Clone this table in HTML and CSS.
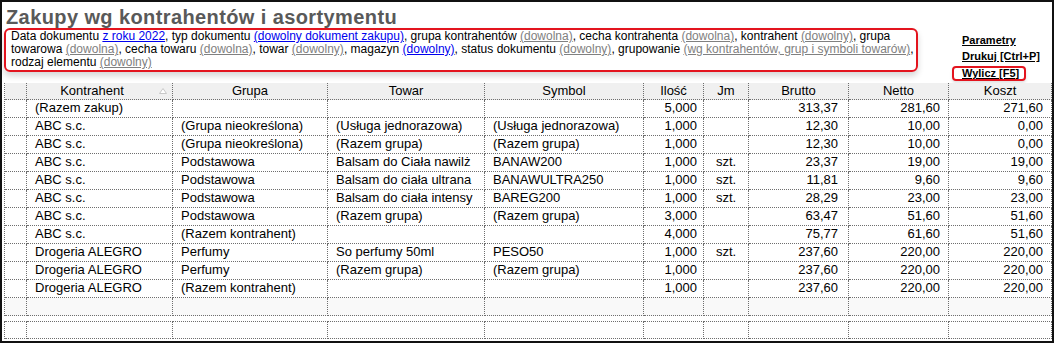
FILE: index.html
```html
<!DOCTYPE html>
<html lang="pl">
<head>
<meta charset="utf-8">
<title>Zakupy wg kontrahentów i asortymentu</title>
<link rel="stylesheet" href="styles.css">
</head>
<body>
<div class="frame">
  <h1 class="title">Zakupy wg kontrahentów i asortymentu</h1>
  <div class="top">
    <div class="params">
      Data dokumentu <a class="lk blue">z roku 2022</a>, typ dokumentu <a class="lk blue">(dowolny dokument zakupu)</a>, grupa kontrahentów <a class="lk gray">(dowolna)</a>, cecha kontrahenta <a class="lk gray">(dowolna)</a>, kontrahent <a class="lk gray">(dowolny)</a>, grupa<br>
      towarowa <a class="lk gray">(dowolna)</a>, cecha towaru <a class="lk gray">(dowolna)</a>, towar <a class="lk gray">(dowolny)</a>, magazyn <a class="lk blue">(dowolny)</a>, status dokumentu <a class="lk gray">(dowolny)</a>, grupowanie <a class="lk gray">(wg kontrahentów, grup i symboli towarów)</a>,<br>
      rodzaj elementu <a class="lk gray">(dowolny)</a>
    </div>
    <div class="actions">
      <a class="act">Parametry</a>
      <a class="act">Drukuj [Ctrl+P]</a>
      <a class="act act-hl">Wylicz [F5]</a>
    </div>
  </div>

  <div class="grid">
    <div class="h"></div>
    <div class="h h-sort">Kontrahent<svg class="sort" width="8" height="6" viewBox="0 0 8 6"><polygon points="4,0.5 7.5,5.5 0.5,5.5" fill="#fff" stroke="#c8c8c8" stroke-width="1"/></svg></div>
    <div class="h">Grupa</div>
    <div class="h">Towar</div>
    <div class="h">Symbol</div>
    <div class="h">Ilość</div>
    <div class="h">Jm</div>
    <div class="h">Brutto</div>
    <div class="h">Netto</div>
    <div class="h">Koszt</div>

    <div class="c"></div><div class="c">(Razem zakup)</div><div class="c"></div><div class="c"></div><div class="c"></div><div class="c n q">5,000</div><div class="c j"></div><div class="c n b">313,37</div><div class="c n">281,60</div><div class="c n">271,60</div>

    <div class="c"></div><div class="c">ABC s.c.</div><div class="c">(Grupa nieokreślona)</div><div class="c">(Usługa jednorazowa)</div><div class="c">(Usługa jednorazowa)</div><div class="c n q">1,000</div><div class="c j"></div><div class="c n b">12,30</div><div class="c n">10,00</div><div class="c n">0,00</div>

    <div class="c"></div><div class="c">ABC s.c.</div><div class="c">(Grupa nieokreślona)</div><div class="c">(Razem grupa)</div><div class="c">(Razem grupa)</div><div class="c n q">1,000</div><div class="c j"></div><div class="c n b">12,30</div><div class="c n">10,00</div><div class="c n">0,00</div>

    <div class="c"></div><div class="c">ABC s.c.</div><div class="c">Podstawowa</div><div class="c">Balsam do Ciała nawilż</div><div class="c">BANAW200</div><div class="c n q">1,000</div><div class="c j">szt.</div><div class="c n b">23,37</div><div class="c n">19,00</div><div class="c n">19,00</div>

    <div class="c"></div><div class="c">ABC s.c.</div><div class="c">Podstawowa</div><div class="c">Balsam do ciała ultrana</div><div class="c">BANAWULTRA250</div><div class="c n q">1,000</div><div class="c j">szt.</div><div class="c n b">11,81</div><div class="c n">9,60</div><div class="c n">9,60</div>

    <div class="c"></div><div class="c">ABC s.c.</div><div class="c">Podstawowa</div><div class="c">Balsam do ciała intensy</div><div class="c">BAREG200</div><div class="c n q">1,000</div><div class="c j">szt.</div><div class="c n b">28,29</div><div class="c n">23,00</div><div class="c n">23,00</div>

    <div class="c"></div><div class="c">ABC s.c.</div><div class="c">Podstawowa</div><div class="c">(Razem grupa)</div><div class="c">(Razem grupa)</div><div class="c n q">3,000</div><div class="c j"></div><div class="c n b">63,47</div><div class="c n">51,60</div><div class="c n">51,60</div>

    <div class="c"></div><div class="c">ABC s.c.</div><div class="c">(Razem kontrahent)</div><div class="c"></div><div class="c"></div><div class="c n q">4,000</div><div class="c j"></div><div class="c n b">75,77</div><div class="c n">61,60</div><div class="c n">51,60</div>

    <div class="c"></div><div class="c">Drogeria ALEGRO</div><div class="c">Perfumy</div><div class="c">So perfumy 50ml</div><div class="c">PESO50</div><div class="c n q">1,000</div><div class="c j">szt.</div><div class="c n b">237,60</div><div class="c n">220,00</div><div class="c n">220,00</div>

    <div class="c"></div><div class="c">Drogeria ALEGRO</div><div class="c">Perfumy</div><div class="c">(Razem grupa)</div><div class="c">(Razem grupa)</div><div class="c n q">1,000</div><div class="c j"></div><div class="c n b">237,60</div><div class="c n">220,00</div><div class="c n">220,00</div>

    <div class="c"></div><div class="c">Drogeria ALEGRO</div><div class="c">(Razem kontrahent)</div><div class="c"></div><div class="c"></div><div class="c n q">1,000</div><div class="c j"></div><div class="c n b">237,60</div><div class="c n">220,00</div><div class="c n">220,00</div>

    <div class="c e"></div><div class="c e"></div><div class="c e"></div><div class="c e"></div><div class="c e"></div><div class="c e"></div><div class="c e"></div><div class="c e"></div><div class="c e"></div><div class="c e"></div>
  </div>

  <div class="grid foot">
    <div class="c"></div><div class="c"></div><div class="c"></div><div class="c"></div><div class="c"></div><div class="c"></div><div class="c"></div><div class="c"></div><div class="c"></div><div class="c"></div>
  </div>
</div>
</body>
</html>
```

FILE: styles.css
```css
html, body {
  margin: 0;
  padding: 0;
  background: #fff;
}

body {
  font-family: "Liberation Sans", Arial, sans-serif;
  color: #000;
}

.frame {
  box-sizing: border-box;
  width: 1054px;
  height: 343px;
  border: 2px solid #111;
  display: flex;
  flex-direction: column;
  overflow: hidden;
}

.title {
  margin: 0;
  padding: 4px 0 0 4px;
  font-size: 20px;
  line-height: 22px;
  letter-spacing: 0.4px;
  font-weight: bold;
  color: #595959;
}

.top {
  display: flex;
  align-items: flex-start;
}

.params {
  box-sizing: border-box;
  width: 914px;
  margin-left: 2px;
  padding: 0 0 1px 5px;
  border: 2px solid #e3141e;
  border-radius: 6px;
  box-shadow: 0 4px 6px rgba(0, 0, 0, 0.16);
  font-size: 12px;
  line-height: 13px;
  white-space: nowrap;
}

.lk {
  text-decoration: underline;
}

.blue {
  color: #0000ee;
}

.gray {
  color: #808080;
}

.actions {
  display: flex;
  flex-direction: column;
  align-items: flex-start;
  margin-left: 34px;
  padding-top: 4px;
}

.act {
  display: block;
  margin-left: 10px;
  font-size: 11px;
  line-height: 16px;
  font-weight: bold;
  color: #000;
  text-decoration: underline;
}

.act-hl {
  margin-left: 0;
  margin-top: 2px;
  padding: 0 5px 0 8px;
  line-height: 11px;
  border: 2px solid #e3141e;
  border-radius: 4px;
  box-shadow: 0 2px 3px rgba(0, 0, 0, 0.12);
}

.grid {
  display: grid;
  grid-template-columns: 22px 146px 155px 157px 159px 60px 45px 100px 100px 103px;
  width: max-content;
  margin: 2px 0 0 2px;
  border-left: 1px dotted #6e6e6e;
  font-size: 13px;
}

.h,
.c {
  box-sizing: border-box;
  border-right: 1px dotted #6e6e6e;
  border-bottom: 1px dotted #6e6e6e;
  white-space: nowrap;
  overflow: hidden;
}

.h {
  position: relative;
  height: 17px;
  line-height: 16px;
  background: #f0f0f0;
  text-align: center;
}

.h-sort {
  padding-right: 15px;
}

.sort {
  position: absolute;
  right: 5px;
  top: 5px;
}

.c {
  height: 18px;
  line-height: 16px;
  padding: 0 4px 0 8px;
}

.n {
  text-align: right;
  padding: 0 8px 0 4px;
}

.q {
  padding-right: 6px;
}

.b {
  padding-right: 10px;
}

.j {
  text-align: center;
  padding: 0;
}

.e {
  background: #f9f9f9;
}

.foot {
  margin-top: 5px;
}

.foot .c {
  border-top: 1px dotted #6e6e6e;
}
```
